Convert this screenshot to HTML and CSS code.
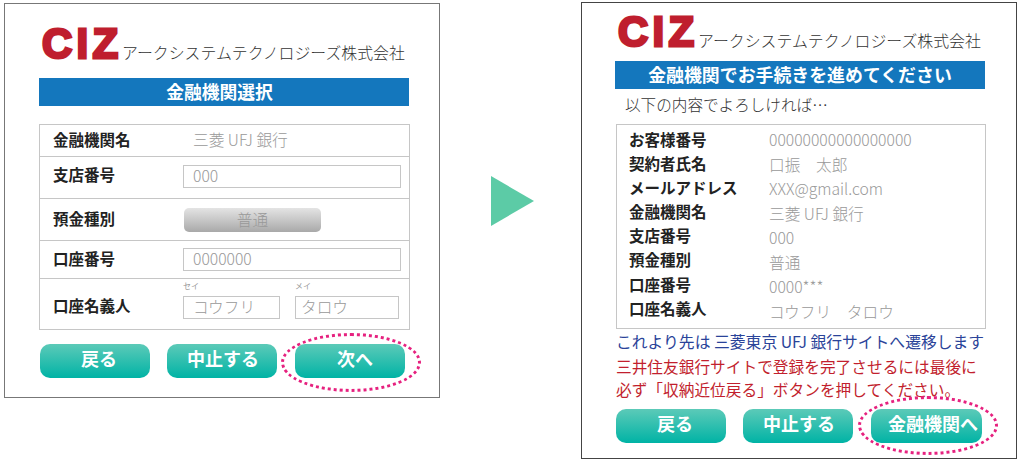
FILE: index.html
```html
<!DOCTYPE html>
<html lang="ja">
<head>
<meta charset="utf-8">
<title>CIZ</title>
<link rel="stylesheet" href="styles.css">
</head>
<body>
<main class="stage">
  <section class="panel panel-left">
    <div class="logo"><span class="ciz">CIZ</span><span class="company">アークシステムテクノロジーズ株式会社</span></div>
    <h1 class="banner banner-short">金融機関選択</h1>
    <div class="form">
      <div class="row row-bank"><span class="label">金融機関名</span><span class="static">三菱 UFJ 銀行</span></div>
      <div class="row row-branch"><span class="label">支店番号</span><span class="field">000</span></div>
      <div class="row row-type"><span class="label">預金種別</span><span class="select">普通</span></div>
      <div class="row row-account"><span class="label">口座番号</span><span class="field">0000000</span></div>
      <div class="row row-name">
        <span class="label">口座名義人</span>
        <div class="name-col name-sei"><span class="hint">セイ</span><span class="field field-name">コウフリ</span></div>
        <div class="name-col name-mei"><span class="hint">メイ</span><span class="field field-name field-mei">タロウ</span></div>
      </div>
    </div>
    <div class="buttons">
      <span class="btn btn-back">戻る</span><span class="btn">中止する</span><span class="btn btn-ringed btn-next">次へ<i class="ring"></i></span>
    </div>
  </section>

  <div class="arrow-wrap"><svg class="arrow" width="43" height="50" viewBox="0 0 43 50"><polygon points="0,0 43,25 0,50" fill="#5ccba6"/></svg></div>

  <section class="panel panel-right">
    <div class="logo"><span class="ciz">CIZ</span><span class="company">アークシステムテクノロジーズ株式会社</span></div>
    <h1 class="banner banner-long">金融機関でお手続きを進めてください</h1>
    <p class="lead">以下の内容でよろしければ…</p>
    <div class="summary">
      <ul class="sum-keys">
        <li>お客様番号</li><li>契約者氏名</li><li>メールアドレス</li><li>金融機関名</li><li>支店番号</li><li>預金種別</li><li>口座番号</li><li>口座名義人</li>
      </ul>
      <ul class="sum-values">
        <li>00000000000000000</li><li>口振　太郎</li><li>XXX@gmail.com</li><li>三菱 UFJ 銀行</li><li>000</li><li>普通</li><li>0000***</li><li>コウフリ　タロウ</li>
      </ul>
    </div>
    <p class="note-blue">これより先は 三菱東京 UFJ 銀行サイトへ遷移します</p>
    <p class="note-red">三井住友銀行サイトで登録を完了させるには最後に<br>必ず「収納近位戻る」ボタンを押してください。</p>
    <div class="buttons buttons-right">
      <span class="btn btn-back">戻る</span><span class="btn">中止する</span><span class="btn btn-ringed btn-wide">金融機関へ<i class="ring"></i></span>
    </div>
  </section>
</main>
</body>
</html>
```

FILE: styles.css
```css
* { box-sizing: border-box; margin: 0; padding: 0; }
html, body { background: #fff; }
body {
  width: 1020px;
  height: 468px;
  overflow: hidden;
  font-family: "Noto Sans CJK JP", "Liberation Sans", sans-serif;
  color: #222;
}
ul { list-style: none; }
.stage { display: flex; align-items: flex-start; padding: 2px 0 0 4px; }

.panel { width: 436px; background: #fff; flex: none; }
.panel-left { height: 395px; margin-top: 1px; border: 1px solid #777; padding: 24px 29px 0 34px; }
.panel-right { height: 457px; border: 1px solid #444; padding: 13px 30px 0 33px; }

.arrow-wrap { width: 141px; flex: none; padding: 174px 0 0 51px; line-height: 0; }
.arrow { display: block; }

.logo { display: flex; align-items: flex-end; height: 37px; margin-left: 2px; white-space: nowrap; }
.ciz {
  flex: none;
  width: 81px;
  font-family: "Liberation Sans", sans-serif;
  font-weight: 700;
  font-size: 42px;
  line-height: 32px;
  height: 37px;
  letter-spacing: 4.2px;
  padding-left: 1px;
  color: #bf1e2e;
  -webkit-text-stroke: 2.8px #bf1e2e;
}
.company { font-size: 15.9px; line-height: 18px; color: #333; margin-bottom: 3px; font-weight: 300; }

.banner {
  height: 28px;
  margin-top: 13px;
  width: 370px;
  background: #1477bd;
  color: #fff;
  font-size: 17.8px;
  font-weight: 700;
  line-height: 26px;
  text-align: center;
}
.banner-short { padding-right: 9px; }
.banner-long { margin-top: 8px; font-size: 17.9px; }

.form { width: 371px; margin-top: 18px; border: 1px solid #c6c6c6; }
.row { display: flex; align-items: center; border-bottom: 1px solid #c6c6c6; padding-left: 13px; }
.row:last-child { border-bottom: 0; }
.row-bank { height: 32px; }
.row-branch { height: 42px; padding-bottom: 2px; }
.row-type { height: 42px; }
.row-account { height: 38px; padding-bottom: 1px; }
.row-name { height: 50px; align-items: flex-end; padding-bottom: 10px; }
.label { width: 130px; flex: none; font-size: 15.5px; font-weight: 700; line-height: 20px; color: #222; margin-bottom: 4px; }
.row-bank .label { margin-bottom: 3px; }
.row-branch .label { margin-bottom: 5px; }
.row-account .label { margin-bottom: 3px; }
.row-name .label { margin-bottom: 4px; }
.static { font-size: 15.7px; color: #999; margin-left: 10px; font-weight: 300; line-height: 20px; margin-bottom: 2px; }
.field {
  display: block;
  width: 218px;
  height: 23px;
  border: 1px solid #c6c6c6;
  padding-left: 9px;
  font-size: 15.7px;
  line-height: 19px;
  color: #999;
  font-weight: 300;
}
.select {
  width: 137px;
  height: 24px;
  margin-left: 1px;
  border-radius: 5px;
  background: linear-gradient(#e4e4e4, #a9a9a9);
  text-align: center;
  font-size: 15.7px;
  line-height: 23px;
  color: #999;
  font-weight: 300;
}
.name-col { display: flex; flex-direction: column; flex: none; }
.name-sei { width: 112px; }
.hint { font-size: 8px; line-height: 10px; color: #999; height: 11px; margin-bottom: 4px; }
.field-name { width: 97px; }
.field-mei { width: 104px; padding-left: 5px; }

.buttons { display: flex; gap: 17px; margin-top: 14px; margin-left: 1px; }
.buttons-right { margin-top: 8px; }
.btn {
  position: relative;
  width: 110px;
  height: 34px;
  border-radius: 10px;
  background: linear-gradient(#5ccab8, #00b3a5);
  color: #fff;
  font-size: 18px;
  font-weight: 700;
  line-height: 29px;
  text-align: center;
  padding-left: 2px;
}
.btn-back { padding-left: 8px; }
.btn-next { padding-left: 10px; }
.btn-ringed { margin-left: 1px; }
.btn-wide { width: 111px; white-space: nowrap; padding-left: 13px; }
.ring {
  position: absolute;
  left: -14px;
  top: -11px;
  width: 140px;
  height: 59px;
  border: 3px dotted #e6217f;
  border-radius: 50%;
}
.btn-wide .ring { left: -13px; top: -13px; }

.lead { font-size: 15.6px; line-height: 20px; color: #333; margin: 5px 0 0 10px; height: 25px; font-weight: 300; }

.summary { display: flex; width: 370px; height: 205px; margin: 5px 0 0 1px; padding: 2px 0 0 12px; border: 1px solid #c6c6c6; }
.sum-keys { width: 140px; flex: none; }
.sum-keys li { height: 24.1px; font-size: 15.5px; font-weight: 700; line-height: 24px; color: #222; white-space: nowrap; }
.sum-values li { height: 24.5px; font-size: 15.7px; font-weight: 300; color: #999; line-height: 26px; white-space: nowrap; }

.note-blue { font-size: 15.8px; line-height: 20px; color: #2a4399; margin: 3px 0 0 1px; white-space: nowrap; font-weight: 400; }
.note-red { font-size: 15.7px; line-height: 23px; color: #c21f2e; margin: 3px 0 0 1px; white-space: nowrap; font-weight: 400; }
```
